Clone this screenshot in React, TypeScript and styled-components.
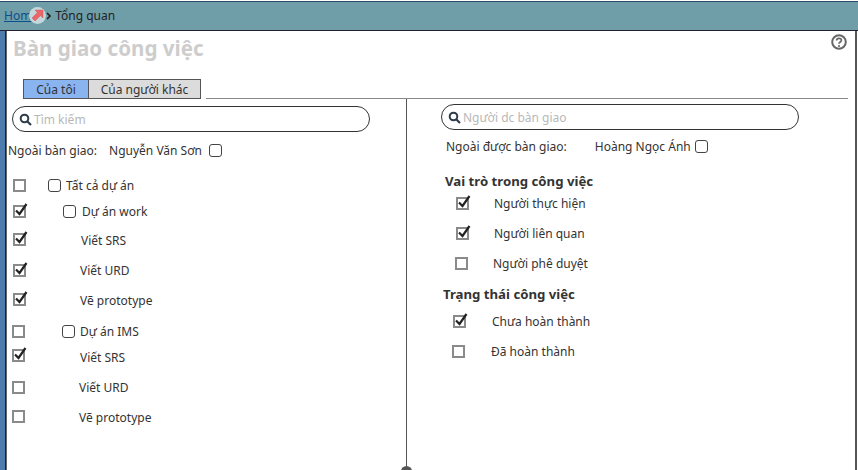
import React from "react";
import styled, { createGlobalStyle } from "styled-components";

const Global = createGlobalStyle`
  html, body { margin: 0; padding: 0; background: #fff; overflow: hidden; }
  body { font-family: "Noto Sans", "DejaVu Sans", sans-serif; font-size: 12px; color: #333; }
`;

const Page = styled.div`
  width: 858px;
  height: 470px;
  display: flex;
  flex-direction: column;
  overflow: hidden;
`;

const TopBar = styled.header`
  height: 27px;
  flex: none;
  margin-top: 1px;
  box-sizing: content-box;
  background: #6f9da8;
  border-top: 1px solid #2c4866;
  border-bottom: 1px solid #223;
  display: flex;
  align-items: center;
  padding: 0 0 1px 4px;
`;

const HomeLink = styled.a`
  color: #0b4f8a;
  text-decoration: underline;
  font-size: 12px;
`;

const Badge = styled.span`
  width: 17px;
  height: 17px;
  border-radius: 50%;
  background: #c3d8dd;
  display: inline-flex;
  align-items: center;
  justify-content: center;
  margin-left: -9px;
  position: relative;
  z-index: 1;
`;

const Chevron = styled.svg`
  margin-left: 0;
`;

const Crumb = styled.span`
  font-size: 12px;
  color: #222;
  margin-left: 4px;
`;

const Shell = styled.div`
  flex: 1;
  display: flex;
  min-height: 0;
`;

const LeftStrip = styled.div`
  width: 5px;
  flex: none;
  background: #4f7cae;
  border-right: 1px solid #222;
`;

const Main = styled.main`
  flex: 1;
  display: flex;
  flex-direction: column;
  border-left: 1px solid #666;
  border-right: 2px solid #555;
  margin-right: 1px;
  position: relative;
  min-width: 0;
`;

const Title = styled.h1`
  margin: 3px 0 0 6px;
  height: 28px;
  line-height: 28px;
  font-size: 20.6px;
  font-weight: 700;
  color: #cdcdcd;
`;

const HelpIcon = styled.svg`
  position: absolute;
  top: 2px;
  right: 7px;
`;

const TabRow = styled.div`
  margin-top: 17px;
  display: flex;
  align-items: flex-end;
  padding-left: 16px;
  padding-right: 7px;
`;

const Tab = styled.button<{ $active?: boolean }>`
  height: 20px;
  width: ${(p) => (p.$active ? "66px" : "113px")};
  margin-left: ${(p) => (p.$active ? "0" : "-1px")};
  padding: 0;
  border: 1px solid #555;
  background: ${(p) => (p.$active ? "#8ab4f0" : "#dcdcdc")};
  font: inherit;
  color: #333;
  font-size: 12px;
`;

const TabLine = styled.div`
  flex: 1;
  height: 1px;
  margin-left: 5px;
  background: #888;
`;

const Columns = styled.div`
  flex: 1;
  display: flex;
  min-height: 0;
`;

const LeftCol = styled.section`
  width: 399px;
  flex: none;
  border-right: 1px solid #555;
  position: relative;
`;

const RightCol = styled.section`
  flex: 1;
  min-width: 0;
`;

const Dot = styled.span`
  position: absolute;
  right: -6px;
  bottom: -7px;
  width: 11px;
  height: 11px;
  border-radius: 50%;
  background: #555;
`;

const Search = styled.div<{ $left: number; $top: number }>`
  width: 358px;
  height: 26px;
  box-sizing: border-box;
  margin: ${(p) => p.$top}px 0 0 ${(p) => p.$left}px;
  border: 1px solid #333;
  border-radius: 13px;
  display: flex;
  align-items: center;
  padding-left: 6px;
  gap: 2px;
  color: #b8b8b8;
  font-size: 12px;
`;

const Owner = styled.div<{ $left: number; $top: number }>`
  display: flex;
  align-items: center;
  height: 16px;
  margin: ${(p) => p.$top}px 0 0 ${(p) => p.$left}px;
  color: #333;
`;

const OwnerName = styled.span<{ $gap: number; $after: number }>`
  margin-left: ${(p) => p.$gap}px;
  margin-right: ${(p) => p.$after}px;
`;

const RoundBox = styled.span`
  width: 11px;
  height: 11px;
  flex: none;
  display: inline-block;
  border: 1px solid #444;
  border-radius: 3px;
  background: #fff;
`;

const SquareBox = styled.span<{ $lift?: number }>`
  width: 9px;
  height: 9px;
  flex: none;
  display: inline-block;
  position: relative;
  border: 2px solid #8a8a8a;
  background: #fff;
  margin-bottom: ${(p) => (p.$lift ?? 0) * 2}px;
`;

const Tick = styled.svg`
  position: absolute;
  left: -1px;
  top: -5px;
`;

const List = styled.div<{ $top: number }>`
  margin-top: ${(p) => p.$top}px;
  display: flex;
  flex-direction: column;
`;

const Row = styled.div<{ $h: number; $x: number }>`
  height: ${(p) => p.$h}px;
  display: flex;
  align-items: center;
  padding-left: ${(p) => p.$x}px;
`;

const Inner = styled.span<{ $left: number }>`
  display: flex;
  align-items: center;
  margin-left: ${(p) => p.$left}px;
`;

const Label = styled.span<{ $left: number }>`
  margin-left: ${(p) => p.$left}px;
  color: #333;
  white-space: nowrap;
`;

const Section = styled.h2<{ $left: number; $top: number }>`
  margin: ${(p) => p.$top}px 0 0 ${(p) => p.$left}px;
  height: 14px;
  line-height: 14px;
  font-size: 13.2px;
  font-weight: 700;
  color: #333;
`;

const Check = ({ on, lift }: { on?: boolean; lift?: number }) => (
  <SquareBox $lift={lift}>
    {on && (
      <Tick width="15" height="15" viewBox="0 0 15 15">
        <path d="M2 8.5 L5.5 12 L12.5 2" fill="none" stroke="#222" strokeWidth="2.2" />
      </Tick>
    )}
  </SquareBox>
);

const Lens = () => (
  <svg width="13" height="13" viewBox="0 0 13 13">
    <circle cx="5.5" cy="5.5" r="3.8" fill="none" stroke="#2e3b4a" strokeWidth="2" />
    <path d="M8.5 8.5 L12 12" stroke="#2e3b4a" strokeWidth="2.2" />
  </svg>
);

type Item = { h: number; x: number; on?: boolean; inner?: number; label: string; left: number; lift?: number };

const leftItems: Item[] = [
  { h: 26, x: 6, label: "Tất cả dự án", inner: 22, left: 5 },
  { h: 26, x: 6, on: true, label: "Dự án work", inner: 37, left: 6 },
  { h: 32, x: 6, on: true, label: "Viết SRS", left: 55, lift: 1 },
  { h: 28, x: 6, on: true, label: "Viết URD", left: 54 },
  { h: 32, x: 6, on: true, label: "Vẽ prototype", left: 54, lift: 1 },
  { h: 30, x: 5, label: "Dự án IMS", inner: 37, left: 5, lift: 0 },
  { h: 22, x: 5, on: true, label: "Viết SRS", left: 55, lift: 2 },
  { h: 38, x: 5, label: "Viết URD", left: 54 },
  { h: 22, x: 5, label: "Vẽ prototype", left: 54, lift: 1 },
];

const roles: Item[] = [
  { h: 30, x: 49, on: true, label: "Người thực hiện", left: 25 },
  { h: 30, x: 49, on: true, label: "Người liên quan", left: 25 },
  { h: 30, x: 48, label: "Người phê duyệt", left: 25 },
];

const states: Item[] = [
  { h: 30, x: 46, on: true, label: "Chưa hoàn thành", left: 26 },
  { h: 30, x: 45, label: "Đã hoàn thành", left: 26 },
];

const renderRow = (it: Item) => (
  <Row key={it.label + it.left + it.x + it.h} $h={it.h} $x={it.x}>
    <Check on={it.on} lift={it.lift} />
    {it.inner !== undefined && (
      <Inner $left={it.inner}>
        <RoundBox />
      </Inner>
    )}
    <Label $left={it.left}>{it.label}</Label>
  </Row>
);

export default function App() {
  return (
    <Page>
      <Global />
      <TopBar>
        <HomeLink href="#">Home</HomeLink>
        <Badge>
          <svg width="13" height="13" viewBox="0 0 13 13">
            <path d="M12 1 L12 9 L9.5 6.7 L4 12 L1 9 L6.3 3.5 L4 1 Z" fill="#e8686a" stroke="#d85a5e" strokeWidth="0.5" />
          </svg>
        </Badge>
        <Chevron width="5" height="8" viewBox="0 0 5 8">
          <path d="M1 1 L4 4 L1 7" fill="none" stroke="#222" strokeWidth="1.6" />
        </Chevron>
        <Crumb>Tổng quan</Crumb>
      </TopBar>
      <Shell>
        <LeftStrip />
        <Main>
          <Title>Bàn giao công việc</Title>
          <HelpIcon width="18" height="18" viewBox="0 0 18 18">
            <circle cx="9" cy="9" r="6.8" fill="none" stroke="#666" strokeWidth="2" />
            <path d="M6.6 7.4 C6.6 4.6 11.4 4.6 11.4 7.3 C11.4 9 9 9 9 10.8" fill="none" stroke="#666" strokeWidth="1.7" />
            <circle cx="9" cy="13" r="1.1" fill="#666" />
          </HelpIcon>
          <TabRow>
            <Tab $active>Của tôi</Tab>
            <Tab>Của người khác</Tab>
            <TabLine />
          </TabRow>
          <Columns>
            <LeftCol>
              <Search $left={5} $top={7}>
                <Lens />
                Tìm kiếm
              </Search>
              <Owner $left={1} $top={10}>
                <span>Ngoài bàn giao:</span>
                <OwnerName $gap={12} $after={7}>Nguyễn Văn Sơn</OwnerName>
                <RoundBox />
              </Owner>
              <List $top={14}>{leftItems.map(renderRow)}</List>
              <Dot />
            </LeftCol>
            <RightCol>
              <Search $left={34} $top={5}>
                <Lens />
                Người dc bàn giao
              </Search>
              <Owner $left={39} $top={8}>
                <span>Ngoài được bàn giao:</span>
                <OwnerName $gap={28} $after={4}>Hoàng Ngọc Ánh</OwnerName>
                <RoundBox />
              </Owner>
              <Section $left={38} $top={20}>Vai trò trong công việc</Section>
              <List $top={0}>{roles.map(renderRow)}</List>
              <Section $left={36} $top={9}>Trạng thái công việc</Section>
              <List $top={5}>{states.map(renderRow)}</List>
            </RightCol>
          </Columns>
        </Main>
      </Shell>
    </Page>
  );
}
